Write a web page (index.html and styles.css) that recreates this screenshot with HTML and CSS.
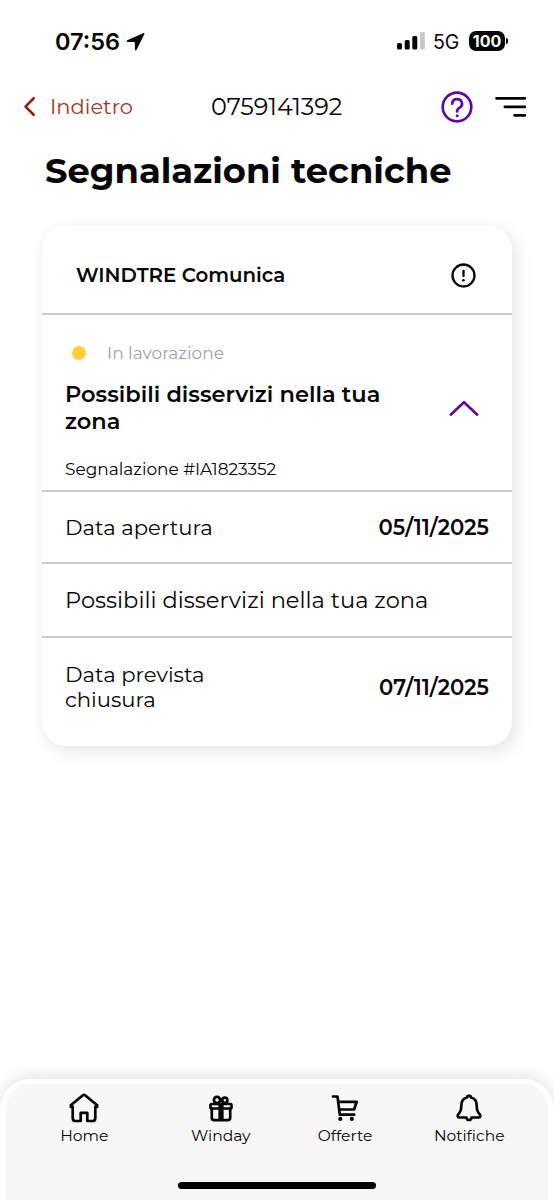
FILE: index.html
```html
<!DOCTYPE html>
<html lang="it">
<head>
<meta charset="utf-8">
<title>Segnalazioni tecniche</title>
<link rel="stylesheet" href="styles.css">
</head>
<body>
<div class="screen">
  <header class="status">
    <span class="clock">07:56</span>
    <svg class="locate" width="19" height="19" viewBox="0 0 19 19"><path d="M17.600 1.100 1.300 8.200c-1 .5-.8 1.700.3 1.700l7.200.1.100 7.400c0 1.100 1.200 1.300 1.700.3L18.400 2c.3-.7-.2-1.200-.8-.9z"/></svg>
    <svg class="signal" width="28" height="18" viewBox="0 0 28 18"><rect x="0" y="11" width="5" height="6.500" rx="1.500"/><rect x="7.700" y="8" width="5" height="9.500" rx="1.500"/><rect x="15.300" y="4" width="5" height="13.500" rx="1.500"/><rect class="off" x="23" y="0" width="4.800" height="17.500" rx="1.500"/></svg>
    <span class="network">5G</span>
    <span class="battery">100</span><i class="battery-cap"></i>
  </header>
  <nav class="topbar">
    <a class="back"><svg width="13" height="21" viewBox="0 0 13 21"><path d="M10.700 2.200 2.500 10.600l8.200 8.200"/></svg><span>Indietro</span></a>
    <span class="number">0759141392</span>
    <svg class="help" width="32" height="32" viewBox="0 0 32 32"><circle cx="16" cy="16" r="14.300"/><path d="M11.200 12.600a4.900 4.600 0 1 1 7 4.300c-1.400.7-2 1.300-2 2.700v.8"/><circle class="dot" cx="16.200" cy="24.800" r="1.500"/></svg>
    <svg class="menu" width="32" height="22" viewBox="0 0 32 22"><path d="M1.500 2.300h28.400M9.800 10.800h20.100M19.600 19.300h10.300"/></svg>
  </nav>
  <h1 class="title">Segnalazioni tecniche</h1>
  <main class="card">
    <section class="card-head">
      <span class="brand">WINDTRE Comunica</span>
      <svg width="25" height="25" viewBox="0 0 25 25"><circle cx="12.500" cy="12.500" r="11"/><path d="M12.500 7.800v5.200"/><circle class="dot" cx="12.500" cy="17.200" r="1.300"/></svg>
    </section>
    <section class="report">
      <div class="state"><i class="bullet"></i><span>In lavorazione</span></div>
      <div class="report-row">
        <h2 class="report-title">Possibili disservizi nella tua zona</h2>
        <svg width="30" height="18" viewBox="0 0 30 18"><path d="M2 15.500 15 3.200l13 12.300"/></svg>
      </div>
      <p class="code">Segnalazione #IA1823352</p>
    </section>
    <section class="row opened"><span class="label">Data apertura</span><b class="date">05/11/2025</b></section>
    <section class="row detail"><span>Possibili disservizi nella tua zona</span></section>
    <section class="row closing"><span class="label">Data prevista chiusura</span><b class="date">07/11/2025</b></section>
  </main>
  <footer class="tabs">
    <div class="tab-list">
      <a class="tab"><svg width="30" height="30" viewBox="0 0 30 30"><path d="M3.700 13.500v11.700c0 2 .8 2.800 2.800 2.800h5.200v-8.200h6.600V28h5.200c2 0 2.800-.8 2.800-2.800V13.500M1.800 14v-1.700L13.600 2.500c.9-.7 1.900-.7 2.800 0l11.800 9.800V14"/></svg><span>Home</span></a>
      <a class="tab"><svg width="30" height="30" viewBox="0 0 30 30"><rect x="4.500" y="11" width="21" height="4.500" rx="1.300"/><path d="M5.800 15.500v9.300c0 1.600.8 2.400 2.400 2.400h13.600c1.600 0 2.400-.8 2.400-2.400v-9.300M13.700 11v16M16.300 11v16"/><circle cx="11" cy="6.900" r="3.100"/><circle cx="18.800" cy="7.300" r="2.600"/></svg><span>Winday</span></a>
      <a class="tab"><svg width="30" height="30" viewBox="0 0 30 30"><path d="M3 3.500h4.500l2.300 18.200h14.400M8.300 8.800h18.400l-2.600 7.700H9.300"/><circle class="dot" cx="10.300" cy="25.900" r="2.100"/><circle class="dot" cx="21.800" cy="25.900" r="2.100"/></svg><span>Offerte</span></a>
      <a class="tab"><svg width="30" height="30" viewBox="0 0 30 30"><path d="M13 4.500c0-2.200 4-2.200 4 0 3.800.8 5.700 4 5.700 8.300 0 4 .7 6.400 3 8.500 1.300 1.300.5 3.200-1.300 3.200h-6.800c-.5 3.300-4.700 3.300-5.200 0H5.600c-1.800 0-2.600-1.900-1.300-3.200 2.300-2.100 3-4.500 3-8.500 0-4.300 1.900-7.500 5.700-8.300z"/></svg><span>Notifiche</span></a>
    </div>
    <i class="home-indicator"></i>
  </footer>
</div>
</body>
</html>
```
FILE: styles.css
```css
* { box-sizing: border-box; }
body { margin: 0; background: #fff; color: #050505; font-family: Montserrat, Inter, sans-serif; }
svg { display: block; flex: none; fill: none; stroke: #050505; stroke-width: 2.700; stroke-linecap: round; stroke-linejoin: round; }
svg .dot { fill: currentColor; stroke: none; }
.screen { display: flex; flex-direction: column; height: 1200px; overflow: hidden; background: #fff; }

.status { display: flex; align-items: center; height: 82px; padding: 0 46px 0 55px; font-family: Inter, sans-serif; }
.clock { width: 71px; font-size: 23.500px; font-weight: 600; }
.locate { fill: #050505; stroke: none; }
.signal { margin-left: auto; fill: #050505; stroke: none; }
.signal .off { fill: #c8c8c8; }
.network { margin-left: 8px; width: 36px; padding-top: 1px; font-size: 19.500px; }
.battery { width: 36px; height: 20px; border-radius: 7px; background: #050505; color: #fff; font-size: 16px; font-weight: 700; line-height: 20px; text-align: center; }
.battery-cap { width: 2px; height: 6px; margin-left: 1px; border-radius: 0 2px 2px 0; background: #050505; }

.topbar { display: flex; align-items: center; height: 49px; padding: 0 26px 0 23px; }
.back { display: flex; align-items: center; gap: 14px; width: 188px; color: #a4341c; font-size: 21px; }
.back svg { stroke: #8c2410; }
.number { width: 230px; font-size: 23.900px; }
.help { color: #5a0aa0; stroke: currentColor; }
.menu { margin-left: 22px; }

.title { margin: 18px 0 0 45px; font-size: 35.300px; font-weight: 700; line-height: 44px; }

.card { margin: 33px 42px 0; height: 520px; border-radius: 24px; background: #fff; box-shadow: 4px 5px 18px rgba(0,0,0,.11); }
.card-head { display: flex; align-items: center; justify-content: space-between; height: 89px; padding: 11px 36px 0 34px; border-bottom: 2px solid #cbcbcb; }
.brand { font-size: 19.750px; font-weight: 600; }
.card-head svg { stroke-width: 2.300; }
.report { height: 177px; padding: 27px 24px 0 23px; border-bottom: 2px solid #cbcbcb; }
.state { display: flex; align-items: center; gap: 21px; height: 22px; padding-left: 7px; color: #a2a2a2; font-size: 17px; }
.bullet { width: 14px; height: 14px; border-radius: 50%; background: #ffd036; }
.report-row { display: flex; align-items: center; justify-content: space-between; margin-top: 17px; padding-right: 9px; }
.report-title { width: 330px; margin: 0; font-size: 22.500px; font-weight: 600; line-height: 27px; }
.report-row svg { stroke: #5a0aa0; }
.code { margin: 23px 0 0; font-size: 16.950px; line-height: 22px; }
.row { display: flex; align-items: center; justify-content: space-between; padding: 0 23px; border-bottom: 2px solid #cbcbcb; }
.opened { height: 72px; }
.detail { height: 74px; font-size: 22.550px; }
.closing { height: 108px; padding-bottom: 11px; border: 0; }
.label { width: 160px; font-size: 21.200px; line-height: 25px; }
.date { font-size: 21.200px; font-weight: 600; }

.tabs { display: flex; flex-direction: column; align-items: center; height: 121px; margin-top: auto; border: solid #fff; border-width: 5px 6px 0; border-radius: 30px 30px 0 0; background: #f7f7f7; box-shadow: 0 -4px 16px rgba(0,0,0,.1); }
.tab-list { display: flex; align-self: stretch; height: 98px; padding: 9px 0 0 10px; }
.tab { display: flex; flex-direction: column; align-items: center; width: 136.500px; gap: 3px; font-size: 15.500px; }
.tab:nth-child(3) { width: 112px; }
.home-indicator { width: 198px; height: 7px; border-radius: 4px; background: #000; }
```
